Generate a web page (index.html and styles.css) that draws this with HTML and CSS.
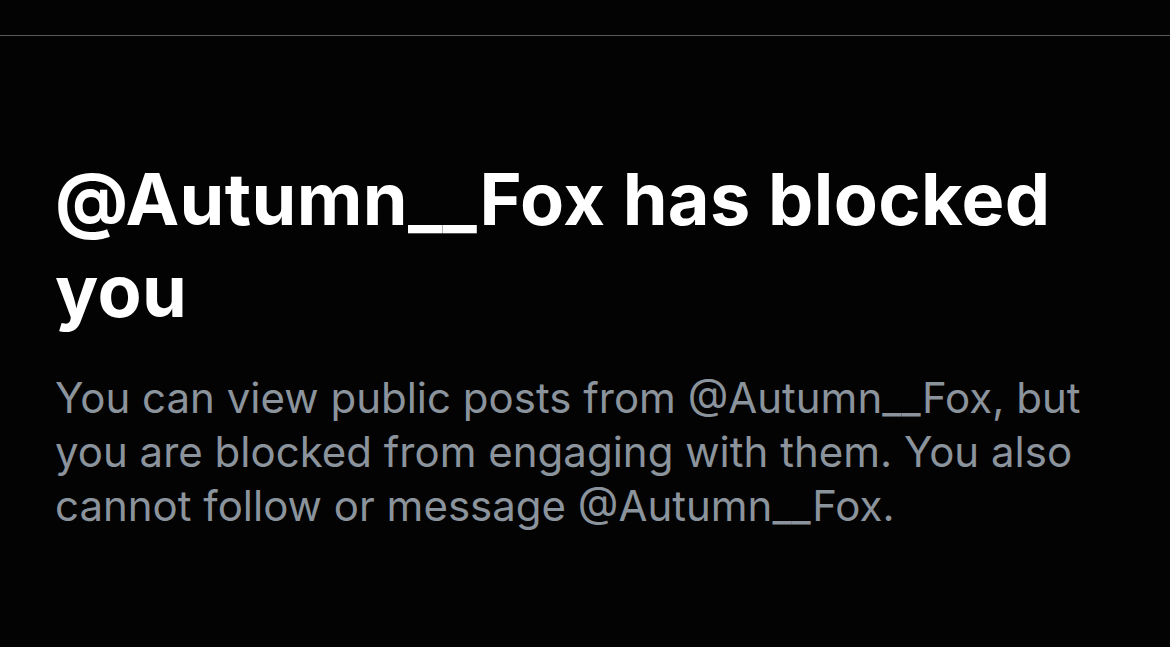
FILE: index.html
```html
<!DOCTYPE html>
<html lang="en">
<head>
<meta charset="utf-8">
<link rel="stylesheet" href="styles.css">
</head>
<body>
<div class="topbar"></div>
<main class="content">
  <h1 class="title">@Autumn__Fox has blocked you</h1>
  <p class="desc">You can view public posts from @Autumn__Fox, but you are blocked from engaging with them. You also cannot follow or message @Autumn__Fox.</p>
</main>
</body>
</html>
```

FILE: styles.css
```css
html, body {
  margin: 0;
  padding: 0;
  background: #030303;
  height: 100%;
  overflow: hidden;
}
body {
  font-family: Inter, "Noto Sans", sans-serif;
}
.topbar {
  height: 35px;
  border-bottom: 1px solid #5a5a5a;
}
.content {
  padding: 117px 60px 0 55px;
}
.title {
  margin: 0;
  color: #ffffff;
  font-size: 72px;
  line-height: 92px;
  font-weight: 700;
  letter-spacing: 0.35px;
  max-width: 1060px;
}
.desc {
  margin: 34px 0 0 0;
  color: #8b939c;
  font-size: 42px;
  line-height: 54px;
  font-weight: 400;
  max-width: 1060px;
}
```
